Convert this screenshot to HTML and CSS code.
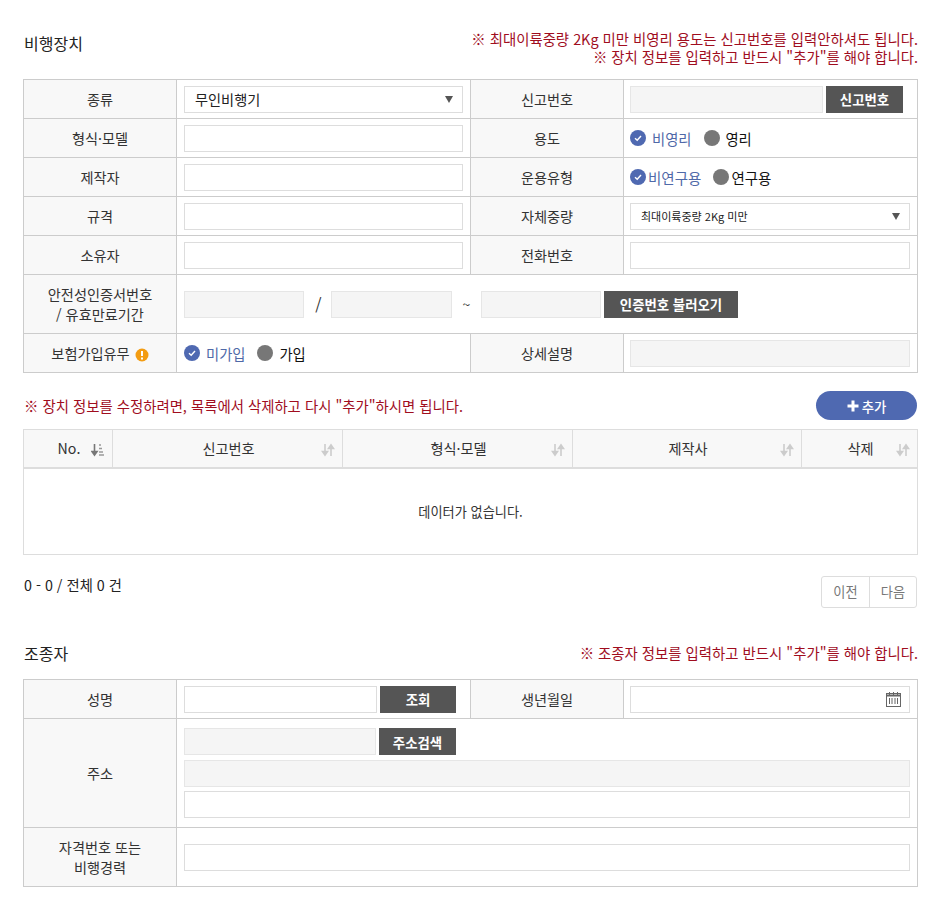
FILE: index.html
```html
<!DOCTYPE html>
<html lang="ko">
<head>
<meta charset="utf-8">
<title>비행장치</title>
<link rel="stylesheet" href="styles.css">
</head>
<body>
<div class="wrap">

<div class="sec-head first">
	<h3>비행장치</h3>
	<p class="note">※ 최대이륙중량 2Kg 미만 비영리 용도는 신고번호를 입력안하셔도 됩니다.<br>※ 장치 정보를 입력하고 반드시 "추가"를 해야 합니다.</p>
</div>

<table class="form">
<colgroup><col class="c-th"><col class="c-td"><col class="c-th"><col class="c-td"></colgroup>
<tr>
	<th>종류</th>
	<td><div class="select">무인비행기<i class="caret"></i></div></td>
	<th>신고번호</th>
	<td><div class="line"><input class="inp off w193" disabled><button class="btn w77">신고번호</button></div></td>
</tr>
<tr>
	<th>형식·모델</th>
	<td><input class="inp"></td>
	<th>용도</th>
	<td><div class="radios">
		<span class="radio on"><svg class="dot" viewBox="0 0 16 16"><circle cx="8" cy="8" r="8" fill="#4f69b1"/><path d="M5 8.2l2.2 2.1L11 6" fill="none" stroke="#fff" stroke-width="1.4"/></svg>비영리</span>
		<span class="radio"><i class="dot grey"></i>영리</span>
	</div></td>
</tr>
<tr>
	<th>제작자</th>
	<td><input class="inp"></td>
	<th>운용유형</th>
	<td><div class="radios tight">
		<span class="radio on"><svg class="dot" viewBox="0 0 16 16"><circle cx="8" cy="8" r="8" fill="#4f69b1"/><path d="M5 8.2l2.2 2.1L11 6" fill="none" stroke="#fff" stroke-width="1.4"/></svg>비연구용</span>
		<span class="radio"><i class="dot grey"></i>연구용</span>
	</div></td>
</tr>
<tr>
	<th>규격</th>
	<td><input class="inp"></td>
	<th>자체중량</th>
	<td><div class="select small">최대이륙중량 2Kg 미만<i class="caret"></i></div></td>
</tr>
<tr>
	<th>소유자</th>
	<td><input class="inp"></td>
	<th>전화번호</th>
	<td><input class="inp"></td>
</tr>
<tr class="tall">
	<th>안전성인증서번호<br>/ 유효만료기간</th>
	<td colspan="3"><div class="line">
		<input class="inp off w120" disabled>
		<span class="sep slash">/</span>
		<input class="inp off w121" disabled>
		<span class="sep tilde">~</span>
		<input class="inp off w120" disabled>
		<button class="btn w134">인증번호 불러오기</button>
	</div></td>
</tr>
<tr>
	<th>보험가입유무 <svg class="warn" viewBox="0 0 14 14"><circle cx="7" cy="7" r="6.5" fill="#f39c12"/><path d="M7 3v5" stroke="#fff" stroke-width="2"/><path d="M7 9.4v2" stroke="#fff" stroke-width="2"/></svg></th>
	<td><div class="radios small">
		<span class="radio on"><svg class="dot" viewBox="0 0 16 16"><circle cx="8" cy="8" r="8" fill="#4f69b1"/><path d="M5 8.2l2.2 2.1L11 6" fill="none" stroke="#fff" stroke-width="1.4"/></svg>미가입</span>
		<span class="radio"><i class="dot grey"></i>가입</span>
	</div></td>
	<th>상세설명</th>
	<td><input class="inp off" disabled></td>
</tr>
</table>

<div class="list-head">
	<p class="note">※ 장치 정보를 수정하려면, 목록에서 삭제하고 다시 "추가"하시면 됩니다.</p>
	<button class="add"><svg viewBox="0 0 12 12"><path d="M6 0.5v11M0.5 6h11" stroke="#fff" stroke-width="3"/></svg>추가</button>
</div>

<table class="list">
<colgroup><col class="l1"><col class="l2"><col class="l3"><col class="l4"><col class="l5"></colgroup>
<tr>
	<th class="no">No.<svg class="sort" viewBox="0 0 14 14"><path d="M3.5 1v10M1 8.5l2.5 3.5L6 8.5z" stroke="#777" stroke-width="1.6" fill="#777"/><path d="M8 2h2M8 5.5h3M8 9h4M8 12h5" stroke="#999" stroke-width="1.5"/></svg></th>
	<th>신고번호<svg class="sort" viewBox="0 0 14 14"><path d="M4 1v10M1.5 8.5L4 12l2.5-3.5z" stroke="#ccc" stroke-width="1.6" fill="#ccc"/><path d="M10 13V3M7.5 5.5L10 2l2.5 3.5z" stroke="#ccc" stroke-width="1.6" fill="#ccc"/></svg></th>
	<th>형식·모델<svg class="sort" viewBox="0 0 14 14"><path d="M4 1v10M1.5 8.5L4 12l2.5-3.5z" stroke="#ccc" stroke-width="1.6" fill="#ccc"/><path d="M10 13V3M7.5 5.5L10 2l2.5 3.5z" stroke="#ccc" stroke-width="1.6" fill="#ccc"/></svg></th>
	<th>제작사<svg class="sort" viewBox="0 0 14 14"><path d="M4 1v10M1.5 8.5L4 12l2.5-3.5z" stroke="#ccc" stroke-width="1.6" fill="#ccc"/><path d="M10 13V3M7.5 5.5L10 2l2.5 3.5z" stroke="#ccc" stroke-width="1.6" fill="#ccc"/></svg></th>
	<th class="del">삭제<svg class="sort" viewBox="0 0 14 14"><path d="M4 1v10M1.5 8.5L4 12l2.5-3.5z" stroke="#ccc" stroke-width="1.6" fill="#ccc"/><path d="M10 13V3M7.5 5.5L10 2l2.5 3.5z" stroke="#ccc" stroke-width="1.6" fill="#ccc"/></svg></th>
</tr>
<tr><td colspan="5" class="empty">데이터가 없습니다.</td></tr>
</table>

<div class="list-foot">
	<span class="count">0 - 0 / 전체 0 건</span>
	<div class="pager"><a>이전</a><a>다음</a></div>
</div>

<div class="sec-head second">
	<h3>조종자</h3>
	<p class="note">※ 조종자 정보를 입력하고 반드시 "추가"를 해야 합니다.</p>
</div>

<table class="form">
<colgroup><col class="c-th"><col class="c-td"><col class="c-th"><col class="c-td"></colgroup>
<tr>
	<th>성명</th>
	<td><div class="line"><input class="inp w193"><button class="btn w76">조회</button></div></td>
	<th>생년월일</th>
	<td><div class="date"><input class="inp"><svg class="cal" viewBox="0 0 15 15"><rect x="0.5" y="1.5" width="14" height="13" fill="none" stroke="#666"/><path d="M0.5 3.5h14" stroke="#666" stroke-width="2"/><path d="M3.5 0v3M7.5 0v3M11.5 0v3M3.5 6v6M6 6v6M9 6v6M11.5 6v6" stroke="#666"/></svg></div></td>
</tr>
<tr>
	<th>주소</th>
	<td colspan="3" class="addr">
		<div class="line"><input class="inp off w192" disabled><button class="btn w77">주소검색</button></div>
		<input class="inp off stack first-stack" disabled>
		<input class="inp stack">
	</td>
</tr>
<tr class="tall">
	<th>자격번호 또는<br>비행경력</th>
	<td colspan="3"><input class="inp"></td>
</tr>
</table>

</div>
</body>
</html>
```

FILE: styles.css
```css
* {
	box-sizing: border-box;
}
body {
	margin: 0;
	background: #fff;
	color: #222;
	font-family: "Noto Sans CJK KR", "Noto Sans", sans-serif;
	font-size: 14px;
}
.wrap {
	width: 895px;
	margin-left: 23px;
	padding-bottom: 12px;
}
p, h3 {
	margin: 0;
}

/* section title + red notes */
.sec-head {
	display: flex;
	justify-content: space-between;
	align-items: flex-start;
}
.sec-head.first {
	height: 38px;
	margin-top: 30px;
	margin-bottom: 11px;
}
.sec-head.second {
	align-items: center;
	height: 20px;
	margin-top: 35px;
	margin-bottom: 16px;
}
h3 {
	margin-left: 1px;
	font-size: 16px;
	font-weight: 400;
	line-height: 26px;
}
.note {
	color: #a00d1e;
	font-size: 14.4px;
	line-height: 18px;
	text-align: right;
}

/* form tables */
table {
	table-layout: fixed;
	border-collapse: collapse;
}
.form {
	width: 895px;
}
.c-th {
	width: 153px;
}
.c-td {
	width: 294px;
}
.form th, .form td {
	height: 39px;
	border: 1px solid #ccc;
	font-size: 14.2px;
	font-weight: 400;
}
.form th {
	background: #f8f8f8;
	color: #333;
	line-height: 20px;
	text-align: center;
}
.form td {
	padding: 0 7px;
}
.form th + td + th + td {
	padding-left: 6px;
}
.form td.addr {
	padding-top: 9px;
	padding-bottom: 9px;
}
.form .tall th, .form .tall td {
	height: 59px;
}
.inp {
	display: block;
	width: 100%;
	height: 27px;
	margin: 0;
	padding: 0 10px;
	border: 1px solid #ddd;
	background: #fff;
	font: inherit;
}
.inp.off {
	background: #f5f5f5;
	border-color: #e6e6e6;
}
.inp.stack {
	margin-top: 4px;
}
.inp.first-stack {
	margin-top: 5px;
}
.w120 { width: 120px; }
.w121 { width: 121px; }
.w192 { width: 192px; }
.w193 { width: 193px; }
.line {
	display: flex;
	align-items: center;
}
.btn {
	height: 27px;
	margin: 0 0 0 3px;
	padding: 0;
	border: none;
	background: #555;
	color: #fff;
	font-family: inherit;
	font-size: 13.4px;
	font-weight: 700;
}
.w76 { width: 76px; }
.w77 { width: 77px; }
.w134 { width: 134px; }
.sep {
	text-align: center;
	color: #333;
}
.slash {
	width: 27px;
	padding-left: 2px;
	font-size: 16px;
}
.tilde {
	width: 29px;
	font-size: 14px;
}

/* fake selects */
.select {
	position: relative;
	height: 27px;
	padding-left: 10px;
	border: 1px solid #ddd;
	background: #fff;
	color: #222;
	font-size: 14.2px;
	line-height: 25px;
}
.select.small {
	font-size: 11px;
}
.caret {
	position: absolute;
	right: 9px;
	top: 9px;
	border-left: 4.5px solid transparent;
	border-right: 4.5px solid transparent;
	border-top: 7px solid #555;
}

/* radios */
.radios {
	display: flex;
	gap: 13px;
	font-size: 14.3px;
}
.radio {
	display: flex;
	align-items: center;
	gap: 5px;
	color: #111;
}
.radio.on {
	gap: 6px;
	color: #4f69a8;
}
.radios.tight {
	gap: 12px;
	font-size: 14.5px;
}
.radios.tight .radio {
	gap: 2px;
}
.radios.small {
	gap: 12px;
}
.radios.small .radio {
	gap: 6px;
}
.dot {
	display: block;
	flex: none;
	width: 16px;
	height: 16px;
}
.dot.grey {
	border-radius: 50%;
	background: #777;
}
.warn {
	width: 14px;
	height: 14px;
	margin-left: 1px;
	vertical-align: -3px;
}

/* device list */
.list-head {
	display: flex;
	justify-content: space-between;
	align-items: center;
	height: 29px;
	margin-top: 18px;
	margin-bottom: 9px;
	padding-right: 1px;
}
.list-head .note {
	margin-left: 1px;
}
.add {
	display: flex;
	align-items: center;
	justify-content: center;
	gap: 3px;
	width: 101px;
	height: 29px;
	padding: 0;
	border: none;
	border-radius: 15px;
	background: #4f69b1;
	color: #fff;
	font-family: inherit;
	font-size: 13.4px;
	font-weight: 500;
}
.add svg {
	width: 12px;
	height: 12px;
}
.list {
	width: 894px;
}
.l1 { width: 89px; }
.l2 { width: 230px; }
.l3 { width: 230px; }
.l4 { width: 229px; }
.l5 { width: 116px; }
.list th {
	position: relative;
	height: 38px;
	border: 1px solid #ddd;
	border-bottom: 2px solid #ddd;
	background: #f8f8f8;
	color: #333;
	font-size: 14.2px;
	font-weight: 400;
	text-align: center;
	padding-right: 20px;
	padding-left: 22px;
}
.sort {
	position: absolute;
	right: 7px;
	top: 13px;
	width: 14px;
	height: 14px;
}
.list .empty {
	height: 87px;
	border: 1px solid #ddd;
	font-size: 13.2px;
	color: #333;
	text-align: center;
}
.list-foot {
	display: flex;
	justify-content: space-between;
	align-items: flex-start;
	margin-top: 21px;
	padding-right: 1px;
}
.count {
	margin-left: 1px;
	margin-top: -1px;
	font-size: 14.3px;
	line-height: 20px;
	color: #222;
}
.pager {
	display: flex;
	height: 32px;
	border: 1px solid #ddd;
	border-radius: 3px;
	background: #fff;
	font-size: 13.2px;
	color: #777;
}
.pager a {
	width: 47px;
	line-height: 30px;
	text-align: center;
}
.pager a + a {
	border-left: 1px solid #ddd;
}
.date {
	position: relative;
}
.cal {
	position: absolute;
	right: 9px;
	top: 6px;
	width: 15px;
	height: 15px;
}
```
